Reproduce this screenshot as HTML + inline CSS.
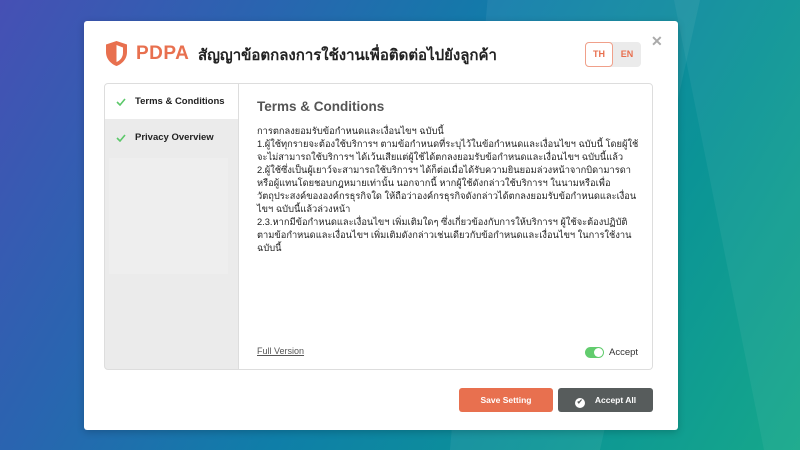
<!DOCTYPE html>
<html><head><meta charset="utf-8"><style>
*{margin:0;padding:0;box-sizing:border-box}
body{width:800px;height:450px;overflow:hidden;position:relative;font-family:"Liberation Sans","Noto Sans CJK SC",sans-serif;background:linear-gradient(120deg,#4650b4 0%,#2a64b0 25%,#0f7ea8 50%,#0b9496 75%,#16a88a 100%)}
.sh{position:absolute;top:0;left:450px;width:250px;height:450px;background:rgba(255,255,255,0.06);clip-path:polygon(15% 0,100% 0,60% 100%,0 100%)}
.sh2{position:absolute;top:0;left:620px;width:180px;height:450px;background:rgba(255,255,255,0.05);clip-path:polygon(30% 0,100% 0,100% 100%,80% 100%)}
.modal{position:absolute;left:84px;top:21px;width:594px;height:409px;background:#fff;border-radius:3px;box-shadow:0 2px 8px rgba(0,0,0,.2)}
.shield{position:absolute;left:21px;top:19px}
.pdpa{position:absolute;left:52px;top:22px;font-size:19px;font-weight:bold;color:#e8704f;letter-spacing:.5px}
.ttl{position:absolute;left:114px;top:22px;font-size:15px;font-weight:bold;color:#222}
.lang{position:absolute;left:501px;top:21px;width:56px;height:25px;background:#ebebeb;border-radius:4px}
.th{position:absolute;left:0;top:0;width:28px;height:25px;background:#fff;border:1px solid #f0a08a;border-radius:4px;color:#e8704f;font-size:9px;font-weight:bold;text-align:center;line-height:23px}
.en{position:absolute;left:28px;top:0;width:28px;height:25px;color:#e8704f;font-size:9px;font-weight:bold;text-align:center;line-height:25px}
.x{position:absolute;left:567px;top:12px;font-size:14px;color:#aaa;font-weight:bold}
.box{position:absolute;left:20px;top:62px;width:549px;height:287px;border:1px solid #ddd;border-radius:4px;overflow:hidden;background:#ebebeb}
.item{position:absolute;left:0;width:133px;height:35px;font-size:9.5px;font-weight:bold;color:#222;padding:12px 0 0 30px}
.item svg{position:absolute;left:11px;top:14px}
.faint{position:absolute;left:4px;top:74px;width:119px;height:116px;background:#eeeeee}
.content{position:absolute;left:133px;top:0;width:416px;height:287px;background:#fff;border-left:1px solid #ddd}
.ct{position:absolute;left:18px;top:15px;font-size:13.5px;font-weight:bold;color:#555}
.txt{position:absolute;left:18px;top:41px;white-space:nowrap;font-size:9.3px;line-height:13px;color:#222}
.fv{position:absolute;left:18px;top:262px;font-size:9px;color:#555;text-decoration:underline}
.tog{position:absolute;left:346px;top:263px;width:19px;height:11px;border-radius:6px;background:#62cc6e}
.tog:after{content:"";position:absolute;right:1px;top:1px;width:9px;height:9px;border-radius:50%;background:#fff}
.acc{position:absolute;left:370px;top:263px;font-size:9.5px;color:#333}
.btn{position:absolute;top:367px;height:24px;border-radius:3px;color:#fff;font-size:8.5px;font-weight:bold;text-align:center;line-height:24px}
.save{left:375px;width:94px;background:#e8704f}
.all{left:474px;width:95px;background:#575c5c}
.all .c{display:inline-block;width:10px;height:10px;border-radius:50%;background:#fff;color:#575c5c;font-size:7px;line-height:10px;margin-right:10px;vertical-align:-1px}
</style></head><body>
<div class="sh"></div><div class="sh2"></div>
<div class="modal">
<svg class="shield" width="23" height="27" viewBox="0 0 23 27"><path d="M11.5 1 L22 4.5 V12 C22 19 17 24 11.5 26 C6 24 1 19 1 12 V4.5 Z" fill="#e8704f"/><path d="M11.5 5 L18 7.5 V12.5 C18 17.5 15 20.5 11.5 22 Z" fill="#fff"/></svg>
<div class="pdpa">PDPA</div>
<div class="ttl">สัญญาข้อตกลงการใช้งานเพื่อติดต่อไปยังลูกค้า</div>
<div class="lang"><div class="th">TH</div><div class="en">EN</div></div>
<div class="x">✕</div>
<div class="box">
<div class="item" style="top:0;background:#fff"><svg width="10" height="8" viewBox="0 0 10 8"><path d="M1 4 L4 7 L9 1" fill="none" stroke="#5cc86a" stroke-width="1.6"/></svg>Terms &amp; Conditions</div>
<div class="item" style="top:36px"><svg width="10" height="8" viewBox="0 0 10 8"><path d="M1 4 L4 7 L9 1" fill="none" stroke="#5cc86a" stroke-width="1.6"/></svg>Privacy Overview</div>
<div class="faint"></div>
<div class="content">
<div class="ct">Terms &amp; Conditions</div>
<div class="txt">การตกลงยอมรับข้อกำหนดและเงื่อนไขฯ ฉบับนี้<br>1.ผู้ใช้ทุกรายจะต้องใช้บริการฯ ตามข้อกำหนดที่ระบุไว้ในข้อกำหนดและเงื่อนไขฯ ฉบับนี้ โดยผู้ใช้<br>จะไม่สามารถใช้บริการฯ ได้เว้นเสียแต่ผู้ใช้ได้ตกลงยอมรับข้อกำหนดและเงื่อนไขฯ ฉบับนี้แล้ว<br>2.ผู้ใช้ซึ่งเป็นผู้เยาว์จะสามารถใช้บริการฯ ได้ก็ต่อเมื่อได้รับความยินยอมล่วงหน้าจากบิดามารดา<br>หรือผู้แทนโดยชอบกฎหมายเท่านั้น นอกจากนี้ หากผู้ใช้ดังกล่าวใช้บริการฯ ในนามหรือเพื่อ<br>วัตถุประสงค์ขององค์กรธุรกิจใด ให้ถือว่าองค์กรธุรกิจดังกล่าวได้ตกลงยอมรับข้อกำหนดและเงื่อน<br>ไขฯ ฉบับนี้แล้วล่วงหน้า<br>2.3.หากมีข้อกำหนดและเงื่อนไขฯ เพิ่มเติมใดๆ ซึ่งเกี่ยวข้องกับการให้บริการฯ ผู้ใช้จะต้องปฏิบัติ<br>ตามข้อกำหนดและเงื่อนไขฯ เพิ่มเติมดังกล่าวเช่นเดียวกับข้อกำหนดและเงื่อนไขฯ ในการใช้งาน<br>ฉบับนี้</div>
<div class="fv">Full Version</div>
<div class="tog"></div><div class="acc">Accept</div>
</div>
</div>
<div class="btn save">Save Setting</div>
<div class="btn all"><span class="c">✔</span>Accept All</div>
</div>
</body></html>
